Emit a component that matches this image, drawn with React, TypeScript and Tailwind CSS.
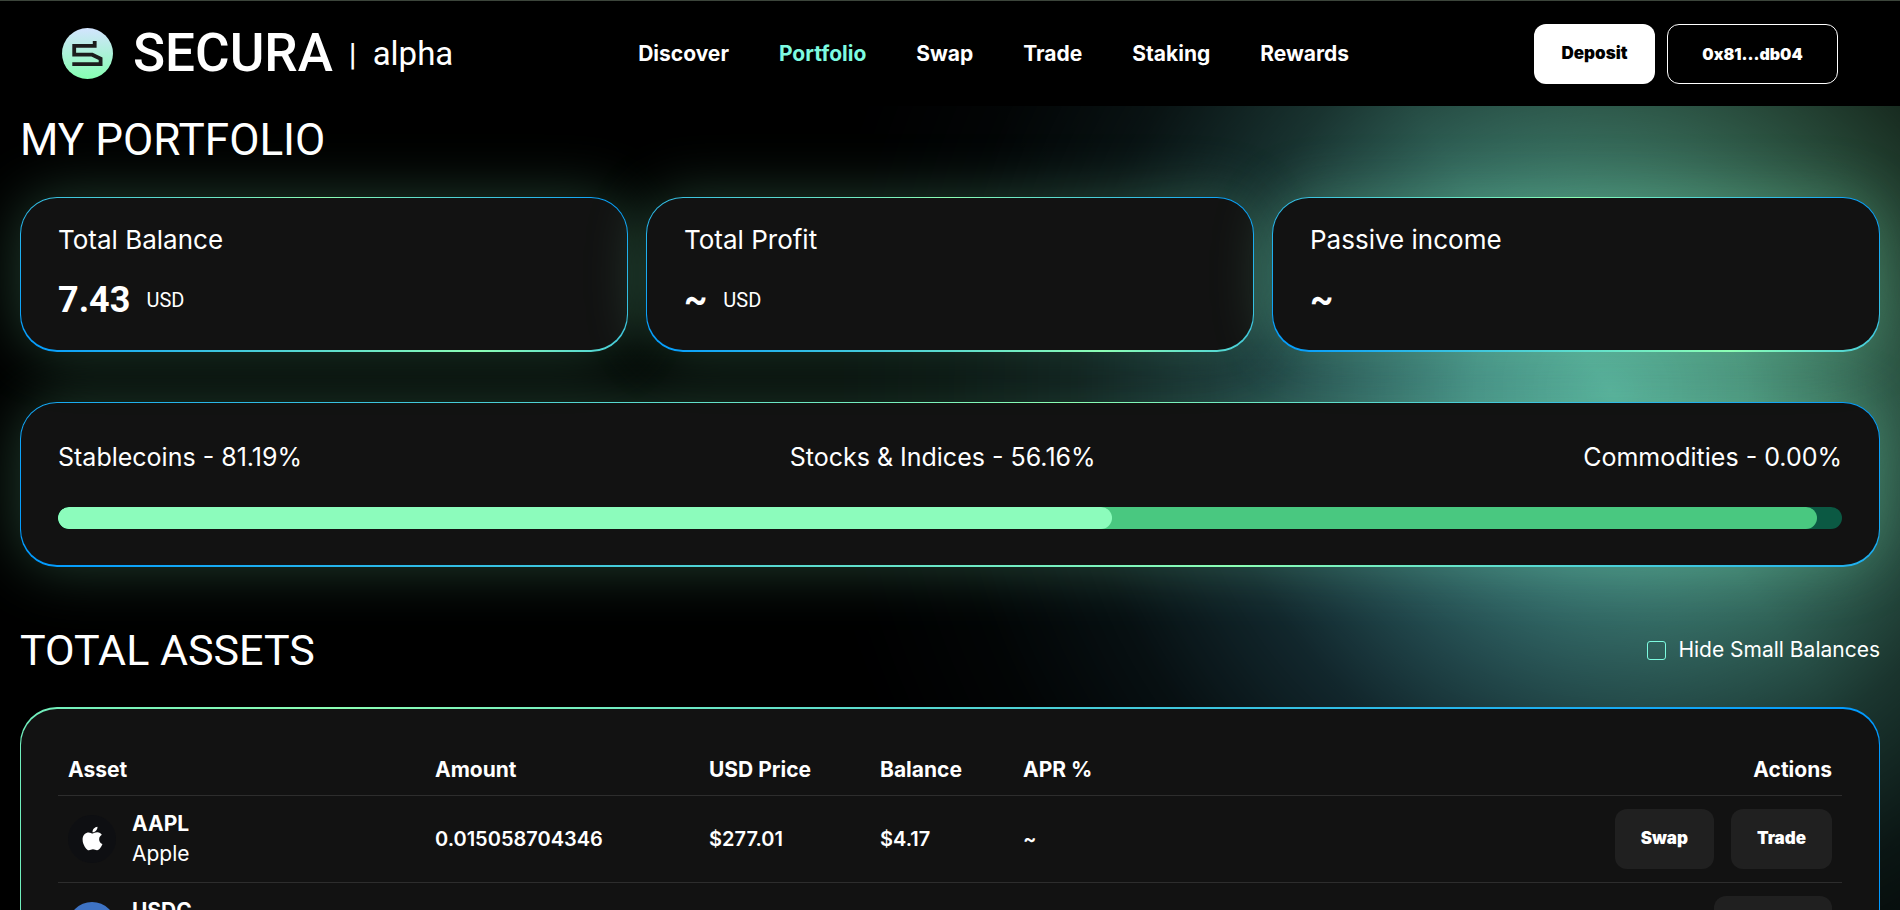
import React from 'react';
import { FaApple } from 'react-icons/fa';

const navLinks = ['Discover', 'Portfolio', 'Swap', 'Trade', 'Staking', 'Rewards'];

const stats = [
  { title: 'Total Balance', value: '7.43', unit: 'USD' },
  { title: 'Total Profit', value: '~', unit: 'USD' },
  { title: 'Passive income', value: '~', unit: '' },
];

const assets = [
  {
    symbol: 'AAPL', name: 'Apple', icon: <AppleIcon />,
    amount: '0.015058704346', price: '$277.01', balance: '$4.17', apr: '~',
    actions: ['Swap', 'Trade'],
  },
  {
    symbol: 'USDC', name: 'USD Coin', icon: <UsdcIcon />,
    amount: '', price: '', balance: '', apr: '',
    actions: ['Deposit'],
  },
];

export default function App() {
  return (
    <div className="relative isolate h-screen overflow-hidden bg-black text-white font-['Inter',sans-serif]">
      {/* Ambient glow behind the page */}
      <div className="absolute -z-10 -top-[410px] -right-[510px] size-[1600px] bg-[linear-gradient(235deg,#4c8a66_32%,#54aa98_50%,#37788a_68%)] [mask-image:radial-gradient(closest-side,black_0%,rgb(0_0_0/0.88)_17%,rgb(0_0_0/0.61)_33%,rgb(0_0_0/0.32)_50%,rgb(0_0_0/0.13)_67%,rgb(0_0_0/0.04)_83%,transparent_100%)]" />

      <Header />

      <main className="px-5">
        <h1 className="pt-1 text-[44px] leading-[60px] font-['Roboto',sans-serif]">MY PORTFOLIO</h1>

        <div className="mt-[27px] grid grid-cols-3 gap-[18px]">
          {stats.map((stat) => (
            <GlowCard key={stat.title}>
              <div className="flex h-[152px] flex-col px-[37px] pt-[22px]">
                <h2 className="text-[26px] leading-[40px]">{stat.title}</h2>
                <p className="mt-[18px] flex items-center gap-4 leading-[44px] font-['Roboto',sans-serif]">
                  <span className="text-[36px] font-bold">{stat.value}</span>
                  {stat.unit && <span className="text-[20px]">{stat.unit}</span>}
                </p>
              </div>
            </GlowCard>
          ))}
        </div>

        <div className="mt-[50px]">
          <GlowCard>
            <div className="px-[37px] pt-[34px] pb-[36px]">
              <div className="flex justify-between text-[25px] leading-[40px]">
                <span>Stablecoins - 81.19%</span>
                <span>Stocks &amp; Indices - 56.16%</span>
                <span>Commodities - 0.00%</span>
              </div>
              <div className="mt-[30px] grid h-[22px] overflow-hidden rounded-full bg-[#0b5943]">
                <div className="col-start-1 row-start-1 w-[98.6%] rounded-full bg-[#49c880]" />
                <div className="col-start-1 row-start-1 w-[59.1%] rounded-full bg-[#8cfcbc]" />
              </div>
            </div>
          </GlowCard>
        </div>

        <div className="mt-[53px] flex items-center justify-between">
          <h1 className="text-[43px] leading-[60px] font-['Roboto',sans-serif]">TOTAL ASSETS</h1>
          <label className="flex items-center gap-3 text-[21px]">
            <input type="checkbox" className="size-[19px] appearance-none rounded-[3px] border border-[#7dfbe0] checked:bg-[#7dfbe0]" />
            Hide Small Balances
          </label>
        </div>

        <AssetTable />
      </main>
    </div>
  );
}

function Header() {
  return (
    <header className="flex h-[106px] items-center justify-between border-t border-[#3c453b] bg-black px-[62px]">
      <a href="#" className="flex items-center">
        <LogoMark />
        <span className="ml-5 text-[53px] leading-none font-medium font-['Roboto',sans-serif]">SECURA</span>
        <span className="ml-4 text-[32px] font-['Roboto',sans-serif]">|</span>
        <span className="ml-4 text-[33px] font-['Roboto',sans-serif]">alpha</span>
      </a>
      <nav className="flex gap-[50px] text-[21px] font-bold">
        {navLinks.map((link) => (
          <a key={link} href="#" className={link === 'Portfolio' ? 'text-[#7dfbe0]' : ''}>{link}</a>
        ))}
      </nav>
      <div className="flex justify-end gap-3">
        <button className="h-[60px] w-[121px] rounded-xl bg-white text-[17px] font-black text-black">Deposit</button>
        <button className="h-[60px] w-[171px] rounded-xl border border-white text-[16px] font-black">0x81...db04</button>
      </div>
    </header>
  );
}

function GlowCard({ children }: { children: React.ReactNode }) {
  return (
    <section className="rounded-[37px] bg-[linear-gradient(45deg,#0099ff,#8cffb4_60%,#0099ff)] px-px pt-px pb-0.5 shadow-[0_0_60px_rgb(125_235_175/0.28)]">
      <div className="rounded-[36px] bg-[#121212]">{children}</div>
    </section>
  );
}

function AssetTable() {
  return (
    <section className="mt-[27px] rounded-[37px] bg-[linear-gradient(90deg,#70eebd,#8cffb4_17%,#0099ff)] px-px pt-0.5 pb-0.5">
      <div className="rounded-[36px] bg-[#121212] px-[37px] pt-[35px] pb-[36px]">
        <table className="w-full table-fixed text-left text-[20px]">
          <colgroup>
            <col className="w-[367px]" />
            <col className="w-[274px]" />
            <col className="w-[171px]" />
            <col className="w-[143px]" />
            <col />
            <col className="w-[300px]" />
          </colgroup>
          <thead className="text-[21px]">
            <tr className="h-[51px] border-b border-[#2d2d2d]">
              <th className="px-2.5 font-bold">Asset</th>
              <th className="px-2.5 font-bold">Amount</th>
              <th className="px-2.5 font-bold">USD Price</th>
              <th className="px-2.5 font-bold">Balance</th>
              <th className="px-2.5 font-bold">APR %</th>
              <th className="px-2.5 text-right font-bold">Actions</th>
            </tr>
          </thead>
          <tbody>
            {assets.map((asset) => (
              <tr key={asset.symbol} className="border-b border-[#2d2d2d] font-semibold">
                <td className="px-2.5 py-[13px]">
                  <div className="flex items-center gap-4">
                    {asset.icon}
                    <div className="text-[21px] leading-[30px]">
                      <div className="font-bold">{asset.symbol}</div>
                      <div className="font-normal">{asset.name}</div>
                    </div>
                  </div>
                </td>
                <td className="px-2.5">{asset.amount}</td>
                <td className="px-2.5">{asset.price}</td>
                <td className="px-2.5">{asset.balance}</td>
                <td className="px-2.5">{asset.apr}</td>
                <td className="px-2.5 py-[13px]">
                  <div className="flex justify-end gap-[17px]">
                    {asset.actions.map((action) => (
                      <button key={action} className="h-[60px] rounded-xl bg-[#202020] px-[26px] text-[17px] font-black">
                        {action}
                      </button>
                    ))}
                  </div>
                </td>
              </tr>
            ))}
          </tbody>
        </table>
      </div>
    </section>
  );
}

function LogoMark() {
  return (
    <svg className="size-[51px]" viewBox="0 0 51 51" fill="none">
      <defs>
        <linearGradient id="logoFill" x1="0" y1="0" x2="0" y2="1">
          <stop offset="0" stopColor="#d3e4ff" />
          <stop offset="1" stopColor="#86ffb2" />
        </linearGradient>
      </defs>
      <circle cx="25.5" cy="25.5" r="25.5" fill="url(#logoFill)" />
      <path d="M32.7 13V17.8H12.2V26.7H30.2L38.6 30.7V36.2H10.3" stroke="#1c1c1c" strokeWidth="3.8" />
    </svg>
  );
}

function AppleIcon() {
  return (
    <span className="flex size-12 items-center justify-center rounded-full bg-[#0e0f12]">
      <FaApple size={27} />
    </span>
  );
}

function UsdcIcon() {
  return (
    <svg className="size-12" viewBox="0 0 48 48" fill="none" stroke="#fff" strokeWidth="3">
      <circle cx="24" cy="24" r="24" fill="#3e73c4" stroke="none" />
      <path d="M19 10a15 15 0 0 0 0 28M29 10a15 15 0 0 1 0 28M24 13v22M29 20c0-5-10-5-10 0s10 3 10 8-10 5-10 0" />
    </svg>
  );
}
